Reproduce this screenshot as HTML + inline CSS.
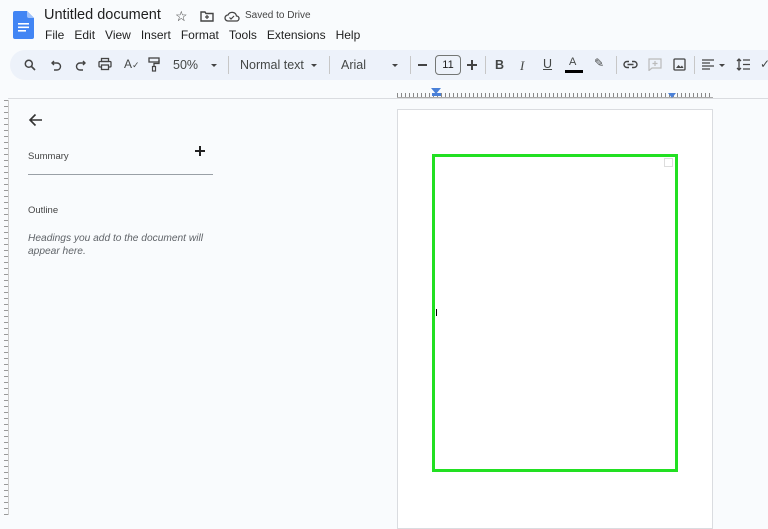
<!DOCTYPE html>
<html><head><meta charset="utf-8"><style>
*{margin:0;padding:0;box-sizing:border-box}
body{width:768px;height:515px;overflow:hidden;background:#f9fbfd;font-family:"Liberation Sans",Arial,sans-serif;color:#444746;position:relative}
.a{position:absolute}
.menu span{margin-right:10px}
.tb{left:10px;top:50px;width:780px;height:30px;background:#edf2fa;border-radius:15px}
.ic{position:absolute;top:57px}
.sep{position:absolute;top:56px;width:1px;height:18px;background:#c7c7c7}
.t{position:absolute;font-size:12.5px;color:#444746}
.dd{position:absolute;top:64px;width:0;height:0;border-left:3.5px solid transparent;border-right:3.5px solid transparent;border-top:3.5px solid #444}
</style></head><body>
<svg class="a" style="left:13px;top:11px" width="21" height="28" viewBox="0 0 21 28"><path d="M2 0h12l7 7v19a2 2 0 0 1-2 2H2a2 2 0 0 1-2-2V2a2 2 0 0 1 2-2z" fill="#4285f4"/><path d="M14 0v5a2 2 0 0 0 2 2h5z" fill="#a1c2fa"/><rect x="5" y="12" width="11" height="1.6" fill="#fff"/><rect x="5" y="15.5" width="11" height="1.6" fill="#fff"/><rect x="5" y="19" width="8" height="1.6" fill="#fff"/></svg>
<div class="a" style="left:44px;top:7px;font-size:14.5px;color:#1f1f1f">Untitled document</div>
<div class="a" style="left:175px;top:8px;font-size:14px;color:#333">☆</div>
<svg class="a" style="left:200px;top:11px" width="14" height="11" viewBox="0 0 14 11"><path d="M1 1h4l1 1.5h7v7.5H1z" fill="none" stroke="#444" stroke-width="1.4"/><path d="M7 4v4M5 6h4" stroke="#444" stroke-width="1.2"/></svg>
<svg class="a" style="left:224px;top:10px" width="16" height="12" viewBox="0 0 16 12"><path d="M4 11a3 3 0 0 1 0-6 4.5 4.5 0 0 1 8.5 1A2.5 2.5 0 0 1 12.5 11z" fill="none" stroke="#444" stroke-width="1.3"/><path d="M5.5 7.5l1.5 1.5 3-3" fill="none" stroke="#444" stroke-width="1.2"/></svg>
<div class="a" style="left:245px;top:10px;font-size:10px;color:#444">Saved to Drive</div>
<div class="a menu" style="left:45px;top:28px;font-size:12px;color:#1f1f1f;white-space:nowrap"><span>File</span><span>Edit</span><span>View</span><span>Insert</span><span>Format</span><span>Tools</span><span>Extensions</span><span>Help</span></div>
<div class="a tb"></div>
<svg class="ic" style="left:24px;top:59px" width="12" height="12" viewBox="0 0 12 12"><circle cx="4.8" cy="4.8" r="3.5" fill="none" stroke="#444" stroke-width="1.5"/><path d="M7.5 7.5L11 11" stroke="#444" stroke-width="1.6"/></svg>
<svg class="ic" style="left:51px;top:60px" width="11" height="11" viewBox="0 0 11 11"><path d="M3 1L1 3l2 2M1 3h5a3.5 3.5 0 0 1 0 7H3" fill="none" stroke="#444" stroke-width="1.4"/></svg>
<svg class="ic" style="left:75px;top:60px" width="11" height="11" viewBox="0 0 11 11"><path d="M8 1l2 2-2 2M10 3H5a3.5 3.5 0 0 0 0 7h3" fill="none" stroke="#444" stroke-width="1.4"/></svg>
<svg class="ic" style="left:98px" width="14" height="14" viewBox="0 0 14 14"><rect x="3.5" y="1.5" width="7" height="3" fill="none" stroke="#444" stroke-width="1.3"/><rect x="1" y="4.5" width="12" height="5.5" rx="1" fill="none" stroke="#444" stroke-width="1.3"/><rect x="3.5" y="8" width="7" height="4.5" fill="#edf2fa" stroke="#444" stroke-width="1.3"/></svg>
<div class="t" style="left:124px;top:57px;font-size:12px">A<span style="font-size:9px">✓</span></div>
<svg class="ic" style="left:148px" width="12" height="15" viewBox="0 0 12 15"><rect x="1" y="1" width="10" height="4" fill="none" stroke="#444" stroke-width="1.3"/><path d="M11 3v3.5H6v3" fill="none" stroke="#444" stroke-width="1.3"/><rect x="4.5" y="9.5" width="3" height="4.5" fill="none" stroke="#444" stroke-width="1.2"/></svg>
<div class="t" style="left:173px;top:58px">50%</div>
<div class="dd" style="left:211px"></div>
<div class="sep" style="left:228px"></div>
<div class="t" style="left:240px;top:58px">Normal text</div>
<div class="dd" style="left:311px"></div>
<div class="sep" style="left:329px"></div>
<div class="t" style="left:341px;top:58px">Arial</div>
<div class="dd" style="left:392px"></div>
<div class="sep" style="left:410px"></div>
<div class="a" style="left:418px;top:64px;width:9px;height:1.5px;background:#444"></div>
<div class="a" style="left:435px;top:55px;width:26px;height:20px;border:1px solid #747775;border-radius:4px;font-size:11px;text-align:center;line-height:18px;color:#1f1f1f">11</div>
<div class="a" style="left:467px;top:64px;width:10px;height:1.5px;background:#444"></div>
<div class="a" style="left:471.3px;top:60px;width:1.5px;height:10px;background:#444"></div>
<div class="sep" style="left:485px"></div>
<div class="t" style="left:495px;top:58px;font-weight:bold">B</div>
<div class="t" style="left:520px;top:58px;font-style:italic;font-family:'Liberation Serif',serif;font-size:13px">I</div>
<div class="t" style="left:543px;top:57px;text-decoration:underline">U</div>
<div class="t" style="left:569px;top:56px;font-size:11px">A</div>
<div class="a" style="left:565px;top:70px;width:18px;height:3px;background:#000"></div>
<div class="t" style="left:594px;top:56px;font-size:12px">✎</div>
<div class="sep" style="left:616px"></div>
<svg class="ic" style="left:623px;top:60px" width="15" height="9" viewBox="0 0 15 9"><path d="M6 1.5H4a3 3 0 0 0 0 6h2M9 1.5h2a3 3 0 0 1 0 6H9M4.5 4.5h6" fill="none" stroke="#444" stroke-width="1.4"/></svg>
<svg class="ic" style="left:648px;top:58px" width="14" height="13" viewBox="0 0 14 13"><path d="M1 1h12v9H4l-3 2.5z" fill="none" stroke="#bbb" stroke-width="1.2"/><path d="M7 3v5M4.5 5.5h5" stroke="#bbb" stroke-width="1.2"/></svg>
<svg class="ic" style="left:673px;top:58px" width="13" height="13" viewBox="0 0 13 13"><rect x="1" y="1" width="11" height="11" rx="1" fill="none" stroke="#444" stroke-width="1.3"/><path d="M3 10l2.5-3 2 2 1.5-1.5L10.5 10z" fill="#444"/></svg>
<div class="sep" style="left:694px"></div>
<svg class="ic" style="left:702px;top:59px" width="13" height="11" viewBox="0 0 13 11"><path d="M0 1h12M0 4h8M0 7h12M0 10h8" stroke="#444" stroke-width="1.3"/></svg>
<div class="dd" style="left:719px"></div>
<svg class="ic" style="left:736px;top:58px" width="14" height="13" viewBox="0 0 14 13"><path d="M3 1v11M1 3l2-2 2 2M1 10l2 2 2-2M7 2h7M7 6.5h7M7 11h7" fill="none" stroke="#444" stroke-width="1.3"/></svg>
<div class="t" style="left:760px;top:57px;font-size:12px">✓</div>
<div class="a" style="left:8px;top:98px;width:760px;height:1px;background:#dadce0"></div>
<div class="a" style="left:397px;top:93px;width:316px;height:5px;background:repeating-linear-gradient(90deg,#888 0 1px,transparent 1px 4px)"></div>
<div class="a" style="left:397px;top:97px;width:316px;height:1px;background:#aaa"></div>
<div class="a" style="left:431px;top:88px;width:0;height:0;border-left:5px solid transparent;border-right:5px solid transparent;border-top:6px solid #4a80d8"></div>
<div class="a" style="left:432px;top:93px;width:9px;height:3px;background:#4a80d8"></div>
<div class="a" style="left:668px;top:93px;width:0;height:0;border-left:4px solid transparent;border-right:4px solid transparent;border-top:5px solid #4a80d8"></div>
<div class="a" style="left:4px;top:100px;width:5px;height:415px;background:repeating-linear-gradient(180deg,#999 0 1px,transparent 1px 6px)"></div>
<div class="a" style="left:8px;top:100px;width:1px;height:415px;background:#ccc"></div>
<svg class="a" style="left:28px;top:113px" width="15" height="14" viewBox="0 0 15 14"><path d="M14 7H2M7.5 1.5L2 7l5.5 5.5" fill="none" stroke="#333" stroke-width="1.6"/></svg>
<div class="a" style="left:28px;top:151px;font-size:9.5px;color:#444">Summary</div>
<div class="a" style="left:195px;top:150px;width:10px;height:1.5px;background:#222"></div>
<div class="a" style="left:199.3px;top:146px;width:1.5px;height:10px;background:#222"></div>
<div class="a" style="left:28px;top:174px;width:185px;height:1px;background:#9aa0a6"></div>
<div class="a" style="left:28px;top:205px;font-size:9.5px;color:#444">Outline</div>
<div class="a" style="left:28px;top:232px;font-size:10.2px;font-style:italic;color:#5f6368;line-height:13px;width:190px">Headings you add to the document will appear here.</div>
<div class="a" style="left:397px;top:109px;width:316px;height:420px;background:#fff;border:1px solid #dadce0"></div>
<div class="a" style="left:432px;top:154px;width:246px;height:318px;border:3px solid #22e022"></div>
<div class="a" style="left:664px;top:158px;width:9px;height:9px;border:1px solid #ddd"></div>
<div class="a" style="left:436px;top:309px;width:1px;height:7px;background:#000"></div>
</body></html>
